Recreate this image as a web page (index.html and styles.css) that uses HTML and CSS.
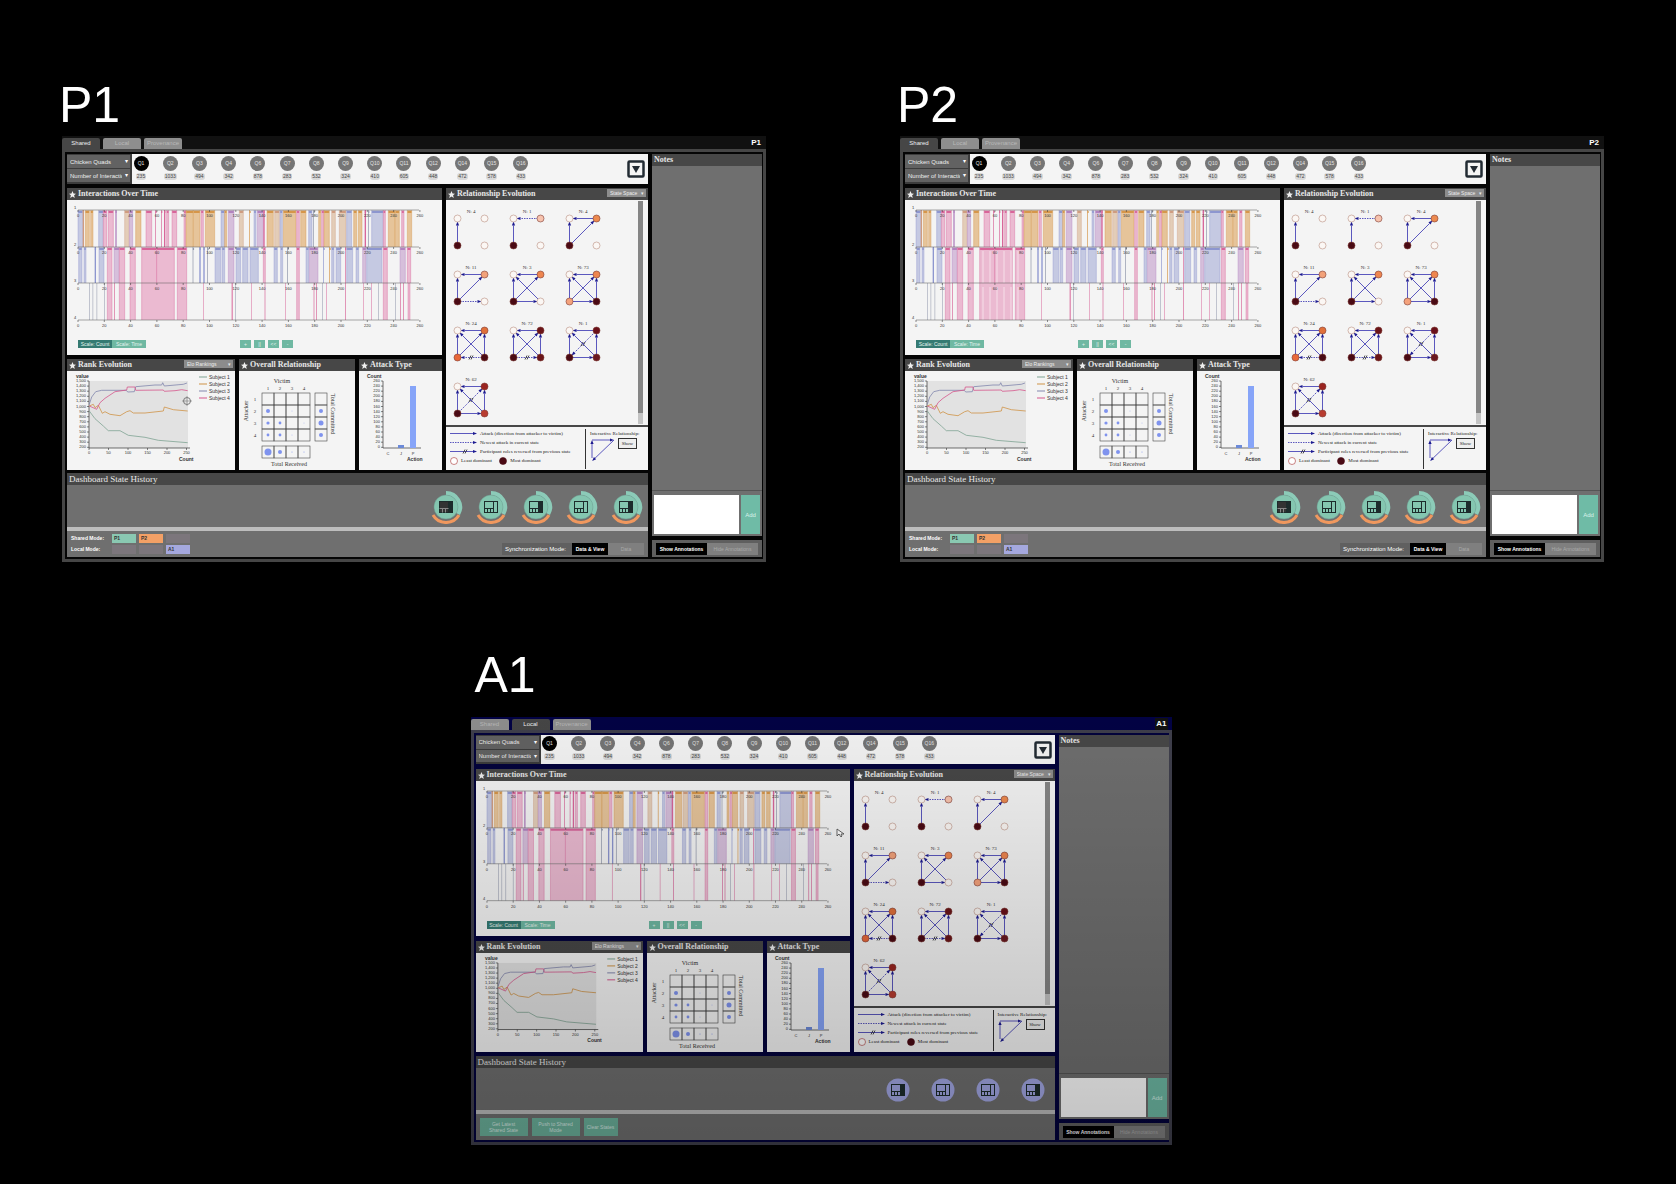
FILE: index.html
```html
<!DOCTYPE html>
<html lang="en">
<head>
<meta charset="utf-8">
<meta name="viewport" content="width=device-width, initial-scale=1">
<title>Shared dashboards</title>
<link rel="stylesheet" href="styles.css">
</head>
<body>
<main class="stage" id="stage"></main>
<script src="app.js"></script>
</body>
</html>
```

FILE: styles.css
```css
* { box-sizing: border-box; }
body {
  margin: 0;
  background: #000;
  color: #fff;
  font-family: "Liberation Sans", Arial, sans-serif;
}
button, select, textarea {
  font: inherit;
  color: inherit;
  border: 0;
  border-radius: 0;
  margin: 0;
  padding: 0;
  background: none;
}
svg { display: block; }
svg text { font-family: "Liberation Sans", Arial, sans-serif; }
svg .serif { font-family: "Liberation Serif", serif; }

.stage {
  display: grid;
  grid-template-columns: 1fr 1fr;
  column-gap: 134px;
  row-gap: 88px;
  padding: 80px 72px 38px 62px;
}
.user-title {
  margin: 0 0 6px -3px;
  font-size: 50px;
  line-height: 50px;
  font-weight: 400;
}

/* One participant's dashboard */
.dashboard {
  --gap: 4px;
  --backdrop: #050505;
  --frame: #464646;
  --toolbar: 30px;
  --notes: 109px;
  --relations: 202px;
  position: relative;
}
.analyst {
  grid-column: 1 / -1;
  justify-self: center;
  width: calc(50% - 70px);
  margin-right: 24px;
}
.analyst .user-title { margin: 0 0 17px 4px; }
.analyst .dashboard {
  --gap: 5px;
  --backdrop: #03033c;
  --frame: #3f3f4c;
  --toolbar: 29px;
  --notes: 108px;
  --relations: 201px;
}
.analyst .dashboard::after {
  content: "";
  position: absolute;
  inset: 0;
  background: linear-gradient(rgba(0, 0, 0, 0.02), rgba(0, 0, 0, 0.24));
  pointer-events: none;
}
.topbar {
  display: flex;
  align-items: flex-end;
  gap: 3px;
  height: 13px;
  background: #111;
  padding-right: 4px;
}
.analyst .topbar { background: #020244; }
.tab {
  width: 38px;
  height: 11px;
  border-radius: 2px 2px 0 0;
  background: #8e8e8e;
  color: #b9b9b9;
  font-size: 6px;
  line-height: 11px;
  text-align: center;
}
.tab.active { background: #464646; color: #eee; }
.who {
  margin-left: auto;
  padding: 0 1px;
  background: #111;
  font-size: 8px;
  line-height: 12px;
  font-weight: 700;
}
.frame {
  display: grid;
  grid-template-columns: 1fr var(--notes);
  gap: 4px;
  border: 3px solid var(--frame);
  padding: 2px;
  background: var(--backdrop);
}
.board { display: grid; gap: var(--gap); align-content: start; min-width: 0; }

/* Toolbar */
.toolbar { display: flex; align-items: center; height: var(--toolbar); background: #f4f4f4; }
.pickers {
  display: grid;
  gap: 1px;
  width: 65px;
  height: 100%;
  padding: 1px 2px 2px 0;
  background: #3c3c3c;
}
.picker { display: block; position: relative; background: #626262; }
.picker select {
  display: block;
  appearance: none;
  width: 100%;
  height: 100%;
  padding: 0 8px 0 3px;
  overflow: hidden;
  color: #eee;
  font-size: 6px;
  line-height: 12px;
}
.picker::after {
  content: "▾";
  position: absolute;
  right: 2px;
  top: 0;
  font-size: 6px;
  line-height: 12px;
  pointer-events: none;
}
.quads {
  display: flex;
  justify-content: space-between;
  width: 398px;
  margin: 0;
  padding: 0 0 3px;
  list-style: none;
}
.quad { display: grid; justify-items: center; gap: 2px; width: 18px; font-size: 5px; line-height: 7px; color: #444; }
.quad button {
  width: 15px;
  height: 15px;
  border-radius: 50%;
  background: #757575;
  color: #e4e4e4;
  line-height: 15px;
}
.quad button.active { background: #000; }
.quad span { padding: 0 1px; border-radius: 3px; background: #d8d8d8; }
.more { margin: 0 3px 0 auto; width: 18px; height: 18px; }
.more svg { width: 18px; height: 18px; }

/* Views */
.views { display: grid; grid-template-columns: 1fr var(--relations); gap: 4px; }
.left { display: grid; gap: var(--gap); align-content: start; min-width: 0; }
.small-views { display: grid; grid-template-columns: 1fr 116px 83px; gap: 4px; }
.view { min-width: 0; background: #f4f4f4; color: #222; }
.view-head {
  display: flex;
  align-items: center;
  gap: 2px;
  height: 12px;
  padding: 0 2px;
  background: #474747;
  color: #e8e8e8;
}
.view-head h3, .history h3, .notes h3 {
  margin: 0;
  font: 700 8px/12px "Liberation Serif", serif;
  white-space: nowrap;
}
.star { width: 7px; height: 7px; fill: #eee; }
.view-head .picker { margin: 0 0 2px auto; width: 49px; height: 8px; background: #8c8c8c; }
.view-head .picker.short { width: 39px; }
.view-head .picker select, .view-head .picker::after { font-size: 5px; line-height: 8px; }
.view svg.chart { width: 100%; height: auto; }
.timeline { height: 155px; }
.controls { display: flex; align-items: center; padding-left: 11px; }
.controls button {
  height: 8px;
  background: #6fb8a2;
  color: #e4f4ee;
  font-size: 5px;
  line-height: 8px;
}
.scale button { width: 34px; }
.scale { display: flex; margin-right: 94px; }
.controls .active { background: #357a72; }
.play { display: flex; gap: 3px; }
.play button { width: 11px; }

.relationship { display: flex; flex-direction: column; }
.evolution { display: flex; justify-content: space-between; height: 225px; padding: 1px 5px 1px 0; }
.states { display: grid; grid-template-columns: repeat(3, 56px); grid-auto-rows: 56px; }
.states svg { width: 56px; height: 56px; }
.scroll { width: 5px; background: #c4c4c4; }
.scroll::before { content: ""; display: block; height: 95%; background: #858585; }
.legend {
  display: flex;
  flex: 1;
  gap: 4px;
  border-top: 2px solid #474747;
  padding: 2px 3px 1px 4px;
  font: 5px/9px "Liberation Serif", serif;
  white-space: nowrap;
}
.legend ul { margin: 0; padding: 0; list-style: none; width: 136px; border-right: 1px solid #333; }
.legend li { display: flex; align-items: center; gap: 3px; height: 9px; }
.legend li svg { width: 27px; height: 7px; }
.legend li svg.dot { width: 8px; height: 8px; }
.interactive { display: grid; grid-template-columns: 28px 19px; align-content: start; }
.interactive p { grid-column: 1 / -1; margin: 0; }
.interactive svg { width: 26px; height: 24px; }
.interactive button { height: 11px; border: 1px solid #333; background: #eee; line-height: 9px; }

/* State history */
.history { display: flex; flex-direction: column; height: 84px; background: #6f6f6f; margin-top: -1px; }
.history h3, .notes h3 { padding-left: 2px; background: #474747; color: #e8e8e8; }
.history h3 { font-size: 9px; font-weight: 400; line-height: 12px; }
.snapshots {
  display: flex;
  justify-content: flex-end;
  align-items: center;
  gap: 11px;
  height: 42px;
  padding: 2px 5px 0 0;
}
.snapshots button, .snapshots svg { width: 34px; height: 34px; }
.history-foot {
  flex: 1;
  display: flex;
  justify-content: space-between;
  border-top: 4px solid #bdbdbd;
  padding: 3px 4px 0;
  font-size: 5px;
}
.modes { display: grid; grid-template-columns: 38px 24px 24px 24px; gap: 2px 3px; align-content: start; font-weight: 700; font-size: 5px; line-height: 9px; margin: 0; }
.modes dt, .modes dd { margin: 0; }
.modes dd { height: 9px; padding-left: 2px; background: #7c767c; color: #333; }
.modes .teal { background: #8ac8b2; }
.modes .orange { background: #f3a066; }
.modes .violet { background: #a5a8de; }
.sync { display: flex; align-self: flex-end; height: 12px; margin-bottom: 2px; background: #606060; line-height: 12px; font-size: 6px; }
.sync span { padding: 0 3px; width: 70px; white-space: nowrap; }
.sync button, .annotations button { background: #7f7f7f; color: #aaa; font-size: 5px; line-height: 12px; width: 36px; white-space: nowrap; }
.sync .active, .annotations .active { background: #000; color: #fff; font-weight: 700; }
.actions { display: flex; gap: 4px; padding-top: 1px; }
.actions button {
  width: 48px;
  height: 18px;
  background: #6cb29c;
  color: #d8ece5;
  font-size: 5px;
  line-height: 6px;
}
.actions button:last-child { width: 34px; }

/* Notes */
.notes-column { display: grid; grid-template-rows: 1fr auto; gap: 4px; }
.notes { display: flex; flex-direction: column; background: #6f6f6f; }
.notes-list { flex: 1; border-bottom: 1px solid #555; }
.add-note { display: flex; gap: 2px; padding: 4px 2px 2px; }
.add-note textarea { flex: 1; min-width: 0; height: 39px; background: #fff; color: #222; font-size: 6px; resize: none; }
.add-note button { width: 19px; background: #6fbba6; color: #d8f2ea; font-size: 6px; }
.annotations { display: flex; padding: 3px 4px 2px; height: 17px; background: #5f5f5f; }
.annotations button { flex: 1; }

.pointer { position: absolute; width: 10px; height: 10px; }
.pointer.busy { left: 17%; top: 61%; }
.pointer.arrow { left: 52%; top: 26%; }
```

FILE: app.js
```js
const INK = { o: '#e6c49a', b: '#c5c9e2', v: '#d6bfdb', p: '#ebbad1', t: '#e3cdb8', g: '#cfd2d8' };
const EDGE = { o: '#d6964a', b: '#8d96cf', v: '#b283bf', p: '#d8669a', t: '#cf9c80', g: '#8c93a8' };

// Attacks per pair of ranks: [start, end, kind], in thirds of a chart unit.
const TRACKS = [
  [[84,98,'b'],[98,102,'t'],[106,118,'o'],[122,129,'o'],[146,160,'b'],[160,170,'p'],[175,190,'p'],[196,200,'v'],[224,238,'t'],[238,248,'v'],[257,273,'o'],[288,305,'p'],[316,318,'p'],[333,335,'p'],[342,346,'p'],[350,356,'p'],[366,380,'p'],[402,408,'p'],[408,430,'o'],[430,450,'o'],[453,460,'p'],[466,494,'o'],[513,524,'b'],[524,530,'o'],[535,552,'v'],[568,580,'t'],[598,600,'o'],[612,618,'b'],[622,640,'v'],[640,644,'p'],[651,670,'o'],[674,688,'t'],[690,697,'b'],[700,738,'o'],[740,748,'p'],[752,768,'o'],[776,786,'b'],[790,792,'g'],[806,812,'o'],[815,822,'p'],[822,838,'o'],[845,856,'t'],[868,888,'t'],[890,905,'b'],[911,920,'o'],[925,936,'o'],[944,948,'p'],[954,956,'g'],[965,1000,'b'],[1000,1006,'p'],[1015,1035,'o'],[1036,1048,'o'],[1055,1062,'p'],[1072,1085,'o']],
  [[86,96,'b'],[102,108,'b'],[134,138,'b'],[147,162,'b'],[172,186,'p'],[192,208,'v'],[208,224,'p'],[240,256,'p'],[275,320,'p'],[320,373,'p'],[382,410,'p'],[428,430,'g'],[448,452,'b'],[460,464,'b'],[472,474,'g'],[495,512,'b'],[516,524,'b'],[535,552,'v'],[558,572,'b'],[578,594,'b'],[600,625,'b'],[640,646,'p'],[672,682,'b'],[692,698,'b'],[712,714,'g'],[740,748,'p'],[768,776,'b'],[778,804,'v'],[820,822,'b'],[838,840,'o'],[845,852,'b'],[858,872,'b'],[885,887,'p'],[890,908,'b'],[918,926,'b'],[938,948,'v'],[950,996,'b'],[1000,1012,'p'],[1050,1066,'v'],[1072,1082,'p']],
  [[118,119,'g'],[128,129,'g'],[140,141,'g'],[162,163,'g'],[172,186,'p'],[192,194,'p'],[208,224,'p'],[240,256,'p'],[275,373,'p'],[382,410,'p'],[460,461,'p'],[545,548,'p'],[556,557,'g'],[604,605,'p'],[644,646,'p'],[706,707,'p'],[740,748,'p'],[791,793,'p'],[799,801,'p'],[816,817,'g'],[828,829,'p'],[886,888,'p'],[940,941,'p'],[963,964,'p'],[984,985,'g'],[1000,1012,'p'],[1036,1037,'g'],[1051,1053,'p'],[1059,1061,'p'],[1074,1080,'p']]
];
const LINES = [10, 47, 83, 120];

function timeline(striped) {
  let s = '';
  TRACKS.forEach((track, i) => {
    const top = LINES[i], h = LINES[i + 1] - top;
    for (const [from, to, k] of track) {
      const x = (from - 51) / 3, w = (to - from) / 3;
      s += w > 1.5
        ? `<rect x="${x}" y="${top}" width="${w}" height="${h}" fill="${INK[k]}"/><path d="M${x} ${top}v${h}M${x + w} ${top}v${h}" stroke="${EDGE[k]}" stroke-width=".4"/>`
        : `<rect x="${x}" y="${top}" width="${Math.max(w, .5)}" height="${h}" fill="${EDGE[k]}"/>`;
      if (i < 2) s += `<rect x="${x}" y="${top + 1}" width="${Math.max(w, 1.5)}" height="2" rx="1" fill="${EDGE[k]}"/>`;
    }
    if (striped && i > 0) {
      for (let x = 78; x < 119; x += 7) s += `<path d="M${x} ${top + 4}v${h - 4}" stroke="#f6dfe9" stroke-width="1"/>`;
    }
  });
  LINES.forEach((y, i) => {
    s += `<path d="M11 ${y}H352" stroke="#555" stroke-width=".5"/><text x="7" y="${y - 1}" font-size="4">${i + 1}</text>`;
    for (let n = 0; n <= 13; n++) {
      const x = 11 + n * 26.3;
      s += `<path d="M${x} ${y}v2" stroke="#444" stroke-width=".6"/><text x="${x}" y="${y + 7}" font-size="4" text-anchor="middle">${n * 20}</text>`;
    }
  });
  return `<svg class="chart" viewBox="0 0 375 140" fill="#333" role="img" aria-label="Interactions over time">${s}</svg>`;
}

const P = { a: [11.5, 17.5], b: [38.5, 17.5], c: [11.5, 44.5], d: [38.5, 44.5] };
function arrow(x1, y1, x2, y2, opts = '') {
  const len = Math.hypot(x2 - x1, y2 - y1), ux = (x2 - x1) / len, uy = (y2 - y1) / len;
  const tx = x2 - ux * 3, ty = y2 - uy * 3, bx = tx - ux * 4, by = ty - uy * 4;
  const mx = (x1 + x2) / 2, my = (y1 + y2) / 2;
  return `<path d="M${x1} ${y1}L${bx} ${by}" stroke="#4a46b8" stroke-width=".9" ${opts.includes('-') ? 'stroke-dasharray="1.5 1"' : ''}/>` +
    `<path d="M${tx} ${ty}L${bx - uy * 1.6} ${by + ux * 1.6}L${bx + uy * 1.6} ${by - ux * 1.6}Z" fill="#1c1a90"/>` +
    (opts.includes('/') ? `<path d="M${mx - 2} ${my + 2}l2 -4M${mx} ${my + 2}l2 -4" stroke="#222" stroke-width=".8"/>` : '');
}
// Each state: count, edges (from, to, style) and node fills a-d.
const W = '#fbf7f4', D = '#4a0a14';
const STATES = [
  [4, 'ca', [W, W, D, W]],
  [1, 'ca ba-', [W, '#f7c3ae', D, W]],
  [4, 'ca ba cb', [W, '#ec8a4f', D, W]],
  [11, 'ca ba cb cd-', [W, '#f2a27a', D, W]],
  [3, 'ca ba cb da cd', [W, '#ee8650', D, W]],
  [73, 'ca ba cb da cd db', [W, '#ee8650', '#f4a27c', D]],
  [24, 'ca ba cb da dc-/ db', [W, '#e0703a', '#e8683a', D]],
  [72, 'ca ba cb da cd-/ db', [W, '#6a1418', D, '#6a1418']],
  [1, 'ca ba bc-/ da cd db', [W, '#6a1018', D, '#6a1820']],
  [62, 'ca ba cb-/ da cd db', [W, '#9a2420', D, '#b83c30']]
];
function state([n, edges, fills]) {
  const e = edges.split(' ').map(t => arrow(...P[t[0]], ...P[t[1]], t.slice(2))).join('');
  const d = 'abcd'.split('').map((k, i) => `<circle cx="${P[k][0]}" cy="${P[k][1]}" r="3.5" fill="${fills[i]}" stroke="${fills[i] === W ? '#b98d80' : '#7c3a34'}" stroke-width=".6"/>`).join('');
  return `<svg viewBox="0 0 56 56">${e}${d}<text class="serif" x="25" y="12" font-size="5" text-anchor="middle" fill="#333">N: ${n}</text></svg>`;
}

const RANK = [
  ['#7fa393', '103,180 120,203 145,225 160,239 195,239 220,253 270,259 310,268 398,275'],
  ['#cf9346', '103,165 115,160 120,170 130,163 142,187 150,182 165,190 195,194 215,182 225,179 235,186 270,186 325,180 328,168 355,176 398,180'],
  ['#8286ad', '103,160 110,138 122,122 140,118 214,118 218,123 238,122 242,107 300,102 320,102 323,95 328,105 385,100 396,96'],
  ['#d5568c', '103,165 125,175 135,155 150,142 180,122 215,117 217,108 240,108 242,118 325,117 328,121 360,119 380,116 398,119']
];
function rank() {
  let s = '<rect x="22" y="10" width="99" height="67" fill="#e2e2e2"/>';
  for (let i = 0; i < 14; i++) {
    const y = 10 + i * 5.1;
    s += `<path d="M20 ${y}h2" stroke="#333" stroke-width=".6"/><text x="19" y="${y + 1}" font-size="4" text-anchor="end">${(1500 - i * 100).toLocaleString('en')}</text>`;
  }
  for (let i = 0; i < 6; i++) s += `<path d="M${22 + i * 19.5} 77v2" stroke="#333" stroke-width=".6"/><text x="${22 + i * 19.5}" y="83" font-size="4" text-anchor="middle">${i * 50}</text>`;
  s += '<path d="M22 10V77H123" fill="none" stroke="#333" stroke-width=".7"/>';
  RANK.forEach(([c, pts], i) => {
    const p = pts.split(' ').map(q => { const [x, y] = q.split(','); return `${((x - 36) / 3).toFixed(1)},${((y - 60) / 3).toFixed(1)}`; }).join(' ');
    s += `<polyline points="${p}" fill="none" stroke="${c}" stroke-width=".8"/><path d="M132 ${6 + i * 7}h8" stroke="${c}" stroke-width="1"/><text x="142" y="${8 + i * 7}" font-size="5">Subject ${i + 1}</text>`;
  });
  s += '<text x="9" y="7" font-size="5" font-weight="700">value</text><text x="112" y="90" font-size="5" font-weight="700">Count</text>';
  return `<svg class="chart" viewBox="0 0 168 99" fill="#333" role="img" aria-label="Rank evolution">${s}</svg>`;
}

function overall() {
  const cell = (x, y, r) => `<rect x="${x}" y="${y}" width="12" height="12" fill="none" stroke="#444" stroke-width=".6"/>` + (r ? `<circle cx="${x + 6}" cy="${y + 6}" r="${r}" fill="#7f93ee"/>` : '');
  const m = [[0, 0, 0, 0], [2, 0, .4, 0], [1.6, 1.4, 0, .4], [1.4, 1.4, .4, 0]];
  let s = '';
  m.forEach((row, i) => {
    row.forEach((r, j) => { s += cell(23 + j * 12, 22 + i * 12, r); });
    s += cell(76, 22 + i * 12, [0, 2, 2.5, 2][i]) + cell(23 + i * 12, 75, [3.5, 2, .5, .5][i]);
    s += `<text class="serif" x="${29 + i * 12}" y="19" font-size="5" text-anchor="middle">${i + 1}</text><text class="serif" x="16" y="${30 + i * 12}" font-size="5" text-anchor="middle">${i + 1}</text>`;
  });
  s += `<text class="serif" x="43" y="12" font-size="6" text-anchor="middle">Victim</text>
  <text class="serif" x="50" y="95" font-size="6" text-anchor="middle">Total Received</text>
  <text class="serif" font-size="6" text-anchor="middle" transform="translate(9 40) rotate(-90)">Attacker</text>
  <text class="serif" font-size="6" text-anchor="middle" transform="translate(92 43) rotate(90)">Total Committed</text>`;
  return `<svg class="chart" viewBox="0 0 116 99" fill="#333" role="img" aria-label="Overall relationship">${s}</svg>`;
}

function attack() {
  let s = '';
  for (let i = 0; i < 14; i++) {
    const y = 10 + i * 5.1;
    s += `<path d="M22 ${y}h2" stroke="#333" stroke-width=".6"/><text x="21" y="${y + 1}" font-size="4" text-anchor="end">${260 - i * 20}</text>`;
  }
  s += `<path d="M24 10V77H62" fill="none" stroke="#333" stroke-width=".7"/>
  <rect x="39" y="74" width="6" height="3" fill="#6c8ad8"/><rect x="51" y="15" width="6" height="62" fill="#86a4f8"/>
  <text x="29" y="84" font-size="4" text-anchor="middle">C</text><text x="42" y="84" font-size="4" text-anchor="middle">J</text><text x="54" y="84" font-size="4" text-anchor="middle">P</text>
  <text x="8" y="7" font-size="5" font-weight="700">Count</text><text x="48" y="90" font-size="5" font-weight="700">Action</text>`;
  return `<svg class="chart" viewBox="0 0 83 99" fill="#333" role="img" aria-label="Attack type">${s}</svg>`;
}

// kind: "full" shades the whole thumbnail, "side" its right column, "plain" nothing.
function snapshot(local, kind, i) {
  const full = kind === 'full';
  const icon = `<rect x="10.500" y="11.500" width="13" height="11" fill="${full ? '#333' : 'none'}" stroke="#1d2c2c"/>
    <rect x="19.500" y="11.500" width="4" height="11" fill="${kind === 'plain' ? 'none' : '#1d2c2c'}" stroke="#1d2c2c"/>
    <path d="M10.500 18.500h9M13.500 18.500v4M16.500 18.500v4" stroke="${full ? '#888' : '#1d2c2c'}"/>`;
  const ring = local
    ? '<circle cx="17" cy="17" r="11.500" fill="#a3a8e6"/>'
    : `<path d="M17 1A16 16 0 0 1 31 25L27 23A12 12 0 0 0 17 5Z" fill="#8ccbb8"/><circle cx="17" cy="17" r="12" fill="#84c6b0" stroke="#6f9f92" stroke-width=".5"/>
       <path d="M4 25A15 15 0 0 0 30 25" fill="none" stroke="#f0985e" stroke-width="3"/>`;
  return `<button type="button" aria-label="Saved state ${i + 1}"><svg viewBox="0 0 34 34">${ring}${icon}</svg></button>`;
}

const STAR = '<svg class="star" viewBox="0 0 10 10"><path d="M5 0l1.500 3.500 3.500.3-2.700 2.400.9 3.800L5 7.900 1.800 10l.9-3.800L0 3.800l3.500-.3z"/></svg>';
const picker = (label, value, cls = '') => `<label class="picker ${cls}"><select aria-label="${label}"><option>${value}</option></select></label>`;
const head = (title, extra = '') => `<header class="view-head">${STAR}<h3>${title}</h3>${extra}</header>`;
const QUADS = [['Q1',235],['Q2',1033],['Q3',494],['Q4',342],['Q6',878],['Q7',283],['Q8',532],['Q9',324],['Q10',410],['Q11',605],['Q12',448],['Q14',472],['Q15',578],['Q16',433]];
const tab = (name, active) => `<button type="button" class="tab${active ? ' active' : ''}">${name}</button>`;
const dot = (fill, stroke) => `<svg class="dot" viewBox="0 0 8 8"><circle cx="4" cy="4" r="3.500" fill="${fill}" stroke="${stroke}" stroke-width=".6"/></svg>`;
const POINTERS = {
  P1: '<svg class="pointer busy" viewBox="0 0 10 10"><circle cx="5" cy="5" r="3.500" fill="none" stroke="#777"/><path d="M5 0v10M0 5h10" stroke="#888" stroke-width=".7"/></svg>',
  P2: '',
  A1: '<svg class="pointer arrow" viewBox="0 0 10 10"><path d="M2 1v7l2-2 2 3 1-1-1-2h3z" fill="#fff" stroke="#444" stroke-width=".8"/></svg>'
};

function dashboard(name) {
  const local = name === 'A1';
  const kinds = local ? ['side', 'plain', 'plain', 'side'] : ['full', 'plain', 'side', 'plain', 'side'];
  const foot = local
    ? `<div class="actions"><button type="button">Get Latest<br>Shared State</button><button type="button">Push to Shared<br>Mode</button><button type="button">Clear States</button></div>`
    : `<dl class="modes"><dt>Shared Mode:</dt><dd class="teal">P1</dd><dd class="orange">P2</dd><dd></dd><dt>Local Mode:</dt><dd></dd><dd></dd><dd class="violet">A1</dd></dl>
       <div class="sync"><span>Synchronization Mode:</span><button type="button" class="active">Data &amp; View</button><button type="button">Data</button></div>`;
  return `<section class="${local ? 'analyst' : 'participant'}">
  <h2 class="user-title">${name}</h2>
  <div class="dashboard">
    <nav class="topbar">${tab('Shared', !local)}${tab('Local', local)}${tab('Provenance')}<span class="who">${name}</span></nav>
    <div class="frame">
      <div class="board">
        <div class="toolbar">
          <div class="pickers">${picker('Data set', 'Chicken Quads')}${picker('Measure', 'Number of Interactions')}</div>
          <ul class="quads">${QUADS.map(([q, n], i) => `<li class="quad"><button type="button"${i ? '' : ' class="active"'}>${q}</button><span>${n}</span></li>`).join('')}</ul>
          <button type="button" class="more" aria-label="Show more"><svg viewBox="0 0 18 18"><rect x="1.500" y="1.500" width="15" height="15" rx="1" fill="none" stroke="#222b33" stroke-width="2.500"/><path d="M5 6h8l-4 7z" fill="#222b33"/></svg></button>
        </div>
        <div class="views">
          <div class="left">
            <article class="view">${head('Interactions Over Time')}
              <div class="timeline">${timeline(name === 'P2')}
                <div class="controls"><div class="scale"><button type="button" class="active">Scale: Count</button><button type="button">Scale: Time</button></div>
                <div class="play"><button type="button">+</button><button type="button">||</button><button type="button">&lt;&lt;</button><button type="button">-</button></div></div>
              </div>
            </article>
            <div class="small-views">
              <article class="view">${head('Rank Evolution', picker('Ranking', 'Elo Rankings'))}${rank()}</article>
              <article class="view">${head('Overall Relationship')}${overall()}</article>
              <article class="view">${head('Attack Type')}${attack()}</article>
            </div>
          </div>
          <article class="view relationship">${head('Relationship Evolution', picker('Space', 'State Space', 'short'))}
            <div class="evolution"><div class="states">${STATES.map(state).join('')}</div><div class="scroll"></div></div>
            <div class="legend">
              <ul>
                <li><svg viewBox="0 0 27 7">${arrow(0, 3.5, 30, 3.5)}</svg>Attack (direction from attacker to victim)</li>
                <li><svg viewBox="0 0 27 7">${arrow(0, 3.5, 30, 3.5, '-')}</svg>Newest attack in current state</li>
                <li><svg viewBox="0 0 27 7">${arrow(0, 3.5, 30, 3.5, '/')}</svg>Participant roles reversed from previous state</li>
                <li>${dot('#fff', '#a33')}<span>Least dominant</span>&nbsp;${dot(D, D)}<span>Most dominant</span></li>
              </ul>
              <div class="interactive"><p>Interactive Relationship:</p><svg viewBox="0 0 26 24">${arrow(2, 2, 27, 2)}${arrow(2, 20, 2, -1)}${arrow(24, 2, 0, 25)}</svg><button type="button">Show</button></div>
            </div>
          </article>
        </div>
        <section class="history"><h3>Dashboard State History</h3>
          <div class="snapshots">${kinds.map((kind, i) => snapshot(local, kind, i)).join('')}</div>
          <div class="history-foot">${foot}</div>
        </section>
      </div>
      <aside class="notes-column">
        <section class="notes"><h3>Notes</h3><div class="notes-list"></div>
          <form class="add-note"><textarea aria-label="New note"></textarea><button type="button">Add</button></form></section>
        <div class="annotations"><button type="button" class="active">Show Annotations</button><button type="button">Hide Annotations</button></div>
      </aside>
    </div>
    ${POINTERS[name]}
  </div>
</section>`;
}

document.getElementById('stage').innerHTML = ['P1', 'P2', 'A1'].map(dashboard).join('');
```
